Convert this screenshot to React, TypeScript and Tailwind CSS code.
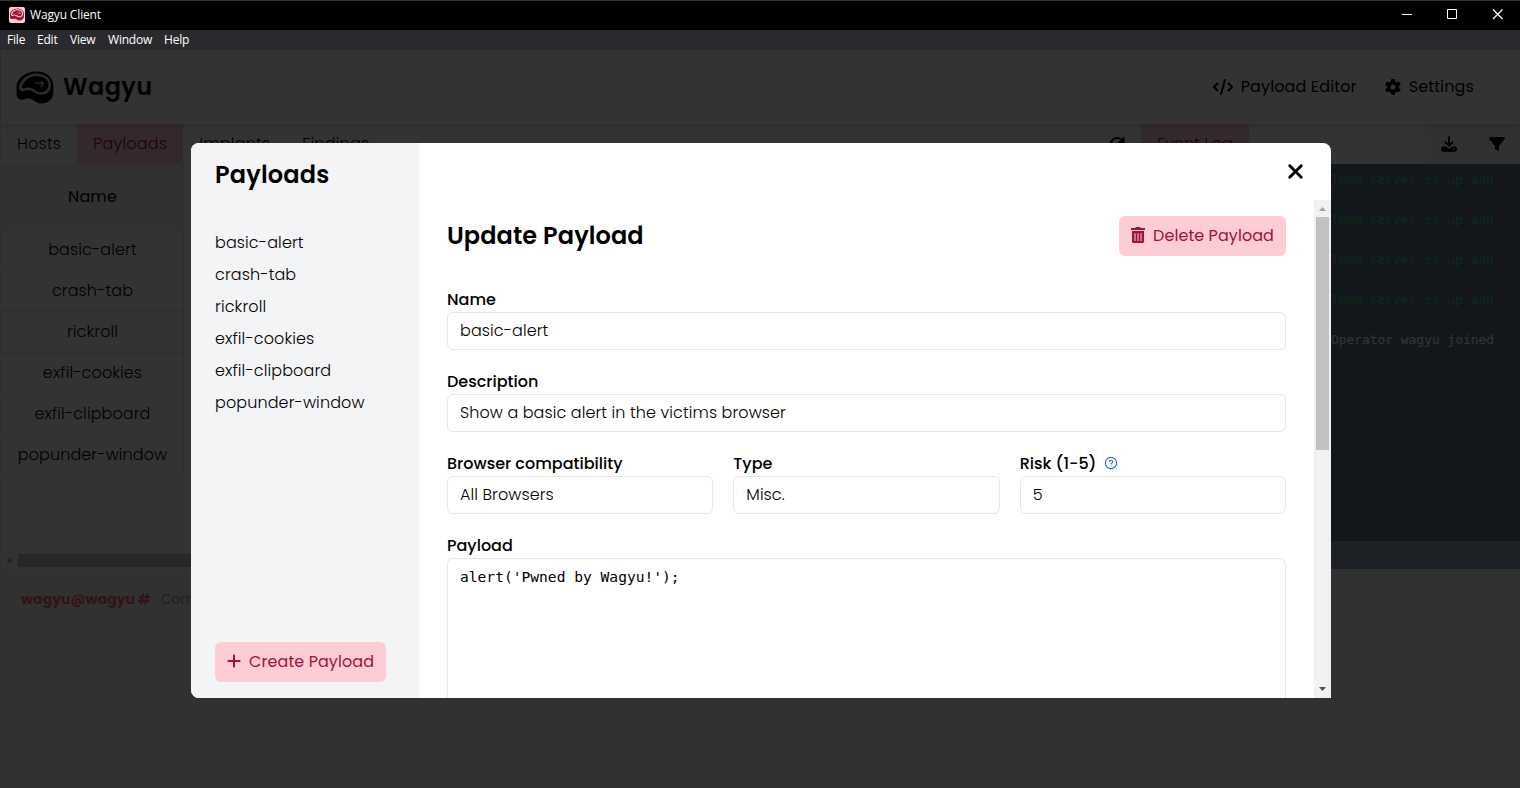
import { ReactNode } from "react";
import { FaCode, FaFilter, FaPlus, FaXmark, FaGear, FaArrowRotateRight } from "react-icons/fa6";
import { FaTrashAlt } from "react-icons/fa";
import { AiOutlineQuestionCircle } from "react-icons/ai";

const payloads = ["basic-alert", "crash-tab", "rickroll", "exfil-cookies", "exfil-clipboard", "popunder-window"];

const serverLines = [1, 2, 3, 4];

function SteakLogo({ className, line }: { className: string; line: string }) {
  return (
    <svg viewBox="0 0 38 34" className={className} fill="none">
      <path
        fill="currentColor"
        d="M0 17C0 8 9 0.5 21 0.5C31 0.5 38 7 38 16V22C38 28.500 33 33.500 25.500 33.500C20 33.500 18.500 29.500 14 28.500C10.500 27.800 8.500 29.500 5.500 29.500C2 29.500 0 27.500 0 24Z"
      />
      <path
        fill={line}
        d="M2.500 17.500C2.500 9.500 11 2.700 21 2.700C30 2.700 35.500 8 35.500 14.700C35.500 20.800 31 24.500 25.500 24.500C19 24.500 17 20 12 19.700C9 19.500 8.500 21.200 6 20.800C3.700 20.500 2.500 19.600 2.500 17.500Z"
      />
      <path
        fill="currentColor"
        d="M5.500 17.300C7 10 13 5.300 20.500 5.300C28.500 5.300 32.800 9 32.800 14.200C32.800 18.800 29.500 22 25.500 22C20 22 18.500 17.300 12.500 17C9 16.900 7 18.800 5.500 17.300Z"
      />
      <path stroke={line} strokeWidth="1.300" strokeLinecap="round" d="M19.500 12.200C22 11.200 24 13 27.500 13.200M25.300 10.500L28 13.300L25 16.500" />
    </svg>
  );
}

function DownloadIcon() {
  return (
    <svg viewBox="0 0 16 16" className="size-4" fill="none">
      <path stroke="currentColor" strokeWidth="1.800" strokeLinecap="round" strokeLinejoin="round" d="M8 1V9.500M4.300 6.200L8 9.800L11.700 6.200" />
      <path
        fill="currentColor"
        fillRule="evenodd"
        d="M2.300 10.500H4.500L6.800 12.300C7.500 12.900 8.500 12.900 9.200 12.300L11.500 10.500H13.700C15 10.500 16 11.500 16 12.800V13.400C16 14.700 15 15.700 13.700 15.700H2.300C1 15.700 0 14.700 0 13.400V12.800C0 11.500 1 10.500 2.300 10.500ZM12.800 12.200A0.900 0.900 0 1 0 12.800 14A0.900 0.900 0 1 0 12.800 12.200Z"
      />
    </svg>
  );
}

function TitleBar() {
  return (
    <>
      <div className="flex h-[30px] items-center justify-between border-t border-[#333] bg-black font-['Open_Sans','Noto_Sans',sans-serif] text-xs text-white">
        <div className="flex items-center gap-[5px] pb-[2px] pl-[9px]">
          <div className="flex size-4 items-center justify-center rounded-[2px] bg-[#fecdd3] text-[#9f1239]">
            <SteakLogo className="h-[13px] w-[14px]" line="#fecdd3" />
          </div>
          <span className="tracking-[-0.15px]">Wagyu Client</span>
        </div>
        <svg width="120" height="29" fill="none" stroke="white" className="text-white">
          <path d="M2 13.500H12M47.500 8.500H56.500V17.500H47.500Z" />
          <path strokeWidth="1.300" d="M93 8.500L102.500 18M102.500 8.500L93 18" />
        </svg>
      </div>
      <div className="flex h-5 items-center gap-3 bg-[#2a2a2e] pl-[7px] font-['Open_Sans','Noto_Sans',sans-serif] text-xs text-white">
        <span className="w-[18px] tracking-[-0.2px]">File</span>
        <span className="w-[21px] tracking-[-0.2px]">Edit</span>
        <span className="w-[26px] tracking-[-0.2px]">View</span>
        <span className="w-11 tracking-[-0.2px]">Window</span>
        <span className="tracking-[-0.2px]">Help</span>
      </div>
    </>
  );
}

function Header() {
  return (
    <header className="relative flex h-[74px] items-center justify-between bg-white pr-[46px] pl-[15px] shadow-md">
      <div className="flex items-center gap-[9px]">
        <SteakLogo className="h-[33px] w-[38px]" line="#d4d4d4" />
        <span className="text-2xl font-semibold tracking-[0.4px]">Wagyu</span>
      </div>
      <nav className="flex gap-7 tracking-[0.13px]">
        <span className="flex items-center gap-2"><FaCode className="size-5" />Payload Editor</span>
        <span className="flex items-center gap-2"><FaGear />Settings</span>
      </nav>
    </header>
  );
}

function Tabs() {
  return (
    <div className="flex h-10 items-stretch font-light tracking-[0.22px]">
      <div className="flex w-[1140px] items-center">
        <span className="px-4">Hosts</span>
        <span className="flex h-full items-center bg-rose-200 px-4 text-rose-800">Payloads</span>
        <span className="px-4">Implants</span>
        <span className="px-4">Findings</span>
        <FaArrowRotateRight className="mr-4 ml-auto" />
      </div>
      <span className="flex items-center bg-rose-200 px-4 tracking-[0.1px] text-rose-800">Event Log</span>
      <div className="ml-auto flex w-[95px] items-center gap-8 bg-gray-100 pl-4">
        <DownloadIcon />
        <FaFilter />
      </div>
    </div>
  );
}

function HostPanel() {
  return (
    <div className="flex w-[1140px] flex-col">
      <div className="flex">
        <div className="w-[183px] border-r border-gray-200 text-center tracking-[0.1px]">
          <div className="flex h-[66px] items-center justify-center border-y border-gray-200 bg-gray-100 pl-px">Name</div>
          {payloads.map((p) => (
            <div key={p} className="flex h-[41px] items-center justify-center border-b border-gray-200 pl-px font-light">{p}</div>
          ))}
        </div>
      </div>
      <div className="mt-auto flex h-[17px] items-center bg-[#f8f8f8]">
        <svg width="17" height="17" fill="#a0a0a0"><path d="M10 5V12L6 8.500Z" /></svg>
        <div className="h-[13px] w-[1100px] bg-[#c1c1c1]" />
      </div>
    </div>
  );
}

function EventLog() {
  return (
    <div className="flex flex-1 flex-col bg-slate-400">
      <div className="flex h-[377px] flex-col gap-5 bg-slate-500 pt-[6px] pl-[190px] font-['DejaVu_Sans_Mono',monospace] text-[12.9px] leading-5 whitespace-pre">
        {serverLines.map((n) => (
          <span key={n} className="text-[#38d27a]">Team Server is up and</span>
        ))}
        <span className="text-white">Operator wagyu joined</span>
      </div>
    </div>
  );
}

function Field({ label, value, hint }: { label: string; value: string; hint?: ReactNode }) {
  return (
    <div className="flex flex-1 flex-col">
      <label className="flex h-6 items-center gap-2 font-medium">{label}{hint}</label>
      <div className="flex h-[38px] items-center rounded-md border border-gray-200 px-3 pb-px font-light tracking-[0.08px]">{value}</div>
    </div>
  );
}

function PayloadDialog() {
  return (
    <div className="flex h-[555px] w-[1140px] overflow-hidden rounded-t-lg rounded-bl-lg bg-white">
      <aside className="flex w-[228px] flex-col items-start bg-gray-100 px-6 py-4">
        <h2 className="text-2xl font-semibold tracking-[0.2px]">Payloads</h2>
        <ul className="mt-9 font-light tracking-[0.11px]">
          {payloads.map((p) => (
            <li key={p} className="h-8 leading-8">{p}</li>
          ))}
        </ul>
        <button className="mt-auto flex h-10 items-center gap-2 rounded-md bg-[#fecdd3] px-3 tracking-[0.08px] text-[#9f1239]">
          <FaPlus className="mb-[2px] h-4 w-[14px]" />Create Payload
        </button>
      </aside>
      <div className="flex flex-1 flex-col">
        <div className="flex h-[57px] items-center justify-end pr-[24px] pb-px">
          <FaXmark className="size-[23px]" />
        </div>
        <div className="flex min-h-0 flex-1">
          <div className="flex flex-1 flex-col gap-5 overflow-hidden pt-4 pr-7 pl-7">
            <div className="mb-3 flex h-10 shrink-0 items-center justify-between">
              <h1 className="text-2xl font-semibold tracking-[0.1px]">Update Payload</h1>
              <button className="flex h-10 items-center gap-2 rounded-md bg-[#fecdd3] px-3 tracking-[0.07px] text-[#9f1239]">
                <FaTrashAlt className="mb-[2px] h-4 w-[14px]" />Delete Payload
              </button>
            </div>
            <div className="flex shrink-0"><Field label="Name" value="basic-alert" /></div>
            <div className="flex shrink-0"><Field label="Description" value="Show a basic alert in the victims browser" /></div>
            <div className="flex shrink-0 gap-5">
              <Field label="Browser compatibility" value="All Browsers" />
              <Field label="Type" value="Misc." />
              <Field label="Risk (1-5)" value="5" hint={<AiOutlineQuestionCircle className="mb-[3px] -ml-px size-[14px] text-blue-600" />} />
            </div>
            <div className="flex min-h-0 flex-1 flex-col">
              <label className="h-6 shrink-0 font-medium">Payload</label>
              <div className="flex-1 rounded-t-md border border-b-0 border-gray-200 px-3 pt-[6px] font-['DejaVu_Sans_Mono',monospace] text-[14.6px] leading-6">
                alert('Pwned by Wagyu!');
              </div>
            </div>
          </div>
          <div className="flex w-[17px] flex-col items-center bg-[#f1f1f1]">
            <svg width="17" height="17" fill="#a3a3a3"><path d="M5 11H12L8.500 7Z" /></svg>
            <div className="h-[233px] w-[13px] bg-[#c1c1c1]" />
            <svg width="17" height="17" fill="#505050" className="mt-auto"><path d="M5 6H12L8.500 10Z" /></svg>
          </div>
        </div>
      </div>
    </div>
  );
}

export default function App() {
  return (
    <div className="flex h-[788px] w-[1520px] flex-col overflow-hidden bg-[#333] font-['Poppins',Inter,sans-serif] text-base text-black">
      <TitleBar />
      <div className="relative flex-1 border-l border-[#26303f]">
        <div className="flex h-full flex-col bg-white">
          <Header />
          <Tabs />
          <div className="flex h-[405px]">
            <HostPanel />
            <EventLog />
          </div>
          <div className="flex flex-1 items-start gap-[10px] bg-gray-100 pt-5 pl-5 text-sm leading-5">
            <span className="font-bold text-red-400">wagyu@wagyu #</span>
            <span className="text-gray-400">Command</span>
          </div>
        </div>
        <div className="absolute inset-0 bg-black/80 pt-[93px] pl-[190px]">
          <PayloadDialog />
        </div>
      </div>
    </div>
  );
}
